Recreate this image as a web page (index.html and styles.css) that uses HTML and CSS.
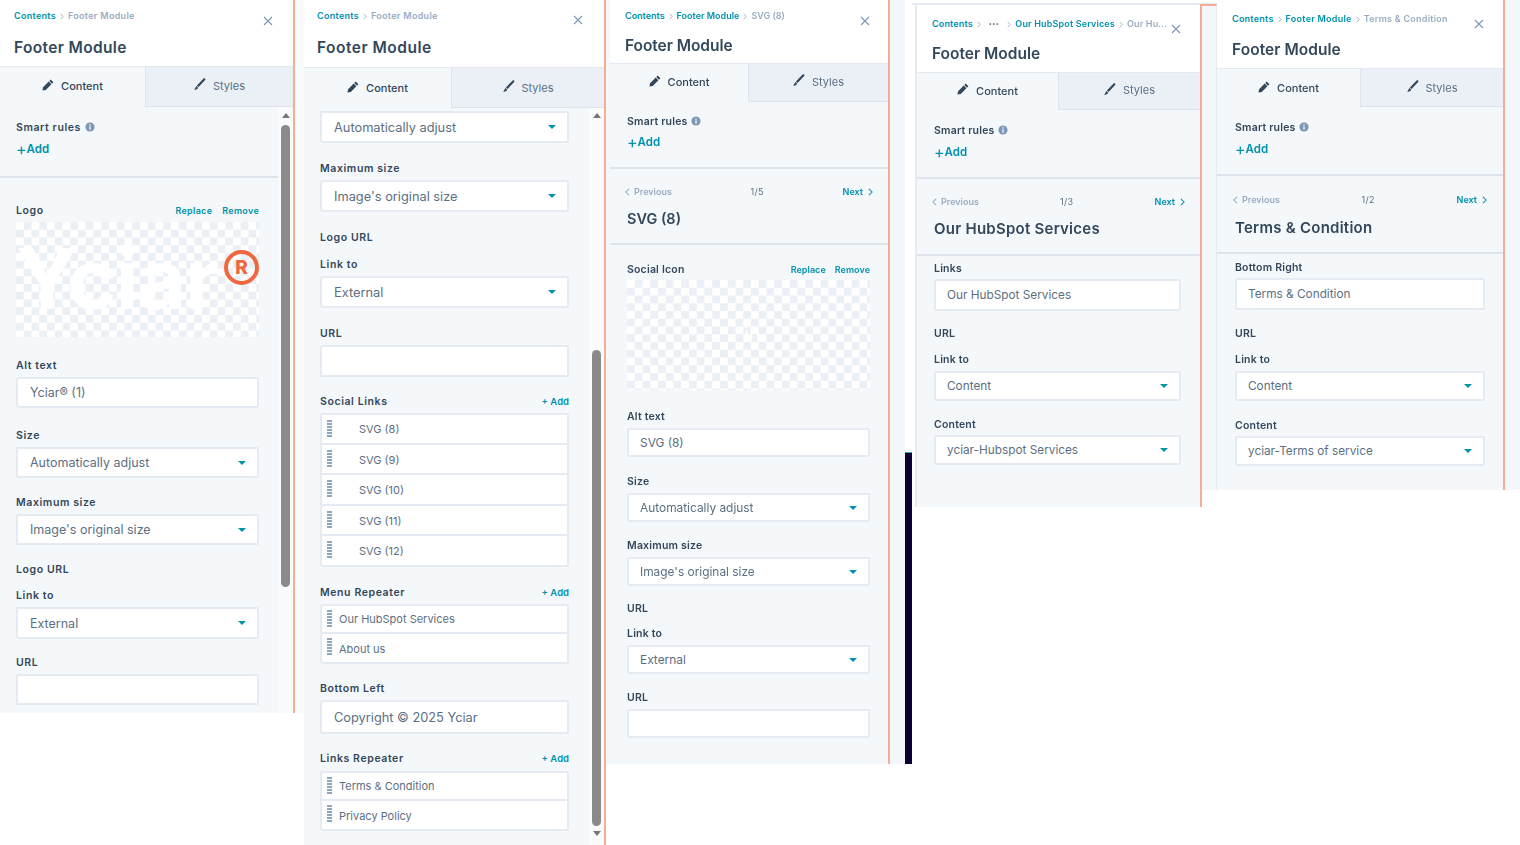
FILE: index.html
```html
<!DOCTYPE html>
<html lang="en">
<head>
<meta charset="utf-8">
<title>Footer Module</title>
<link rel="stylesheet" href="styles.css">
</head>
<body>
<svg class="defs" aria-hidden="true">
  <symbol id="pencil" viewBox="0 0 12 12"><path d="M8.7.6 11.400 3.300 10 4.700 7.300 2ZM6.700 2.600 9.400 5.300 3.800 10.900.4 11.600 1.100 8.200Z"/></symbol>
  <symbol id="brush" viewBox="0 0 12 12"><path d="M11 .5c.6.5.6 1 .1 1.500L4.600 9 2.900 7.400 9.600.6c.5-.4 1-.5 1.400-.1ZM2.300 8l2 1.700C3.500 11.300 2 11.700.2 11.700 1.300 10.700 1.500 9.200 2.300 8Z"/></symbol>
  <symbol id="info" viewBox="0 0 12 12"><circle cx="6" cy="6" r="5.500"/><rect x="5.200" y="5.200" width="1.600" height="4" fill="#f5f8fa"/><rect x="5.200" y="2.700" width="1.600" height="1.600" fill="#f5f8fa"/></symbol>
  <symbol id="close" viewBox="0 0 10 10"><path d="M1 1l8 8M9 1 1 9" fill="none" stroke="currentColor" stroke-width="1.100"/></symbol>
  <symbol id="chev-r" viewBox="0 0 6 10"><path d="M1 1l4 4-4 4" fill="none" stroke="currentColor" stroke-width="1.300"/></symbol>
  <symbol id="chev-l" viewBox="0 0 6 10"><path d="M5 1 1 5l4 4" fill="none" stroke="currentColor" stroke-width="1.300"/></symbol>
</svg>

<div class="strip s-a"></div>
<div class="strip s-b"></div>
<div class="strip s-c"></div>
<div class="strip s-d"></div>
<div class="strip s-e"></div>
<div class="strip s-f"></div>
<div class="strip s-g"></div>

<!-- Panel 1 -->
<section class="win w1">
  <header class="hdr">
    <nav class="crumbs"><a>Contents</a><svg class="cv"><use href="#chev-r"/></svg><span>Footer Module</span></nav>
    <h1 class="ttl">Footer Module</h1>
    <svg class="x"><use href="#close"/></svg>
  </header>
  <div class="tabs">
    <div class="tab on"><svg class="ti"><use href="#pencil"/></svg>Content</div>
    <div class="tab"><svg class="ti"><use href="#brush"/></svg>Styles</div>
  </div>
  <div class="body">
    <div class="main">
      <div class="rules">
        <div class="lbl">Smart rules <svg class="inf"><use href="#info"/></svg></div>
        <a class="add"><span class="pl">+</span>Add</a>
      </div>
      <div class="fields">
        <div class="head mt-25"><span class="lbl">Logo</span><span class="acts"><a>Replace</a><a>Remove</a></span></div>
        <div class="chk mt-5 h-115"><span class="brand">Yciar</span><span class="reg">R</span></div>
        <div class="lbl mt-21">Alt text</div>
        <div class="ctl mt-5 h-31">Yciar® (1)</div>
        <div class="lbl mt-20">Size</div>
        <div class="ctl sel mt-5 h-31">Automatically adjust</div>
        <div class="lbl mt-17">Maximum size</div>
        <div class="ctl sel mt-5 h-31">Image's original size</div>
        <div class="lbl mt-17">Logo URL</div>
        <div class="lbl mt-12">Link to</div>
        <div class="ctl sel mt-5 h-32">External</div>
        <div class="lbl mt-16">URL</div>
        <div class="ctl mt-5 h-31"></div>
      </div>
    </div>
    <div class="sb"><i class="up"></i><b class="thumb"></b></div>
  </div>
</section>

<!-- Panel 2 -->
<section class="win w2">
  <header class="hdr">
    <nav class="crumbs"><a>Contents</a><svg class="cv"><use href="#chev-r"/></svg><span>Footer Module</span></nav>
    <h1 class="ttl">Footer Module</h1>
    <svg class="x"><use href="#close"/></svg>
  </header>
  <div class="tabs">
    <div class="tab on"><svg class="ti"><use href="#pencil"/></svg>Content</div>
    <div class="tab"><svg class="ti"><use href="#brush"/></svg>Styles</div>
  </div>
  <div class="body">
    <div class="main">
      <div class="fields">
        <div class="ctl sel mt-3 h-32">Automatically adjust</div>
        <div class="lbl mt-18">Maximum size</div>
        <div class="ctl sel mt-5 h-32">Image's original size</div>
        <div class="lbl mt-18">Logo URL</div>
        <div class="lbl mt-13">Link to</div>
        <div class="ctl sel mt-5 h-32">External</div>
        <div class="lbl mt-18">URL</div>
        <div class="ctl mt-5 h-32"></div>
        <div class="head mt-17"><span class="lbl">Social Links</span><a class="plus">+ Add</a></div>
        <ul class="list mt-5">
          <li class="row deep">SVG (8)</li>
          <li class="row deep">SVG (9)</li>
          <li class="row deep">SVG (10)</li>
          <li class="row deep">SVG (11)</li>
          <li class="row deep">SVG (12)</li>
        </ul>
        <div class="head mt-18"><span class="lbl">Menu Repeater</span><a class="plus">+ Add</a></div>
        <ul class="list mt-5">
          <li class="row">Our HubSpot Services</li>
          <li class="row">About us</li>
        </ul>
        <div class="lbl mt-17">Bottom Left</div>
        <div class="ctl mt-5 h-34">Copyright © 2025 Yciar</div>
        <div class="head mt-17"><span class="lbl">Links Repeater</span><a class="plus">+ Add</a></div>
        <ul class="list mt-6">
          <li class="row">Terms &amp; Condition</li>
          <li class="row">Privacy Policy</li>
        </ul>
      </div>
    </div>
    <div class="sb"><i class="up"></i><b class="thumb"></b><i class="down"></i></div>
  </div>
</section>

<!-- Panel 3 -->
<section class="win w3">
  <header class="hdr">
    <nav class="crumbs"><a>Contents</a><svg class="cv"><use href="#chev-r"/></svg><a>Footer Module</a><svg class="cv"><use href="#chev-r"/></svg><span>SVG (8)</span></nav>
    <h1 class="ttl">Footer Module</h1>
    <svg class="x"><use href="#close"/></svg>
  </header>
  <div class="tabs">
    <div class="tab on"><svg class="ti"><use href="#pencil"/></svg>Content</div>
    <div class="tab"><svg class="ti"><use href="#brush"/></svg>Styles</div>
  </div>
  <div class="body">
    <div class="main">
      <div class="rules">
        <div class="lbl">Smart rules <svg class="inf"><use href="#info"/></svg></div>
        <a class="add"><span class="pl">+</span>Add</a>
      </div>
      <div class="pager">
        <div class="pg"><span class="prev"><svg class="cl"><use href="#chev-l"/></svg>Previous</span><span class="cnt">1/5</span><a class="next">Next<svg class="cl"><use href="#chev-r"/></svg></a></div>
        <h2 class="sub">SVG (8)</h2>
      </div>
      <div class="fields">
        <div class="head mt-17"><span class="lbl">Social Icon</span><span class="acts"><a>Replace</a><a>Remove</a></span></div>
        <div class="chk mt-4 h-110"><span class="glyph">in</span></div>
        <div class="lbl mt-19">Alt text</div>
        <div class="ctl mt-5 h-29">SVG (8)</div>
        <div class="lbl mt-17">Size</div>
        <div class="ctl sel mt-5 h-29">Automatically adjust</div>
        <div class="lbl mt-16">Maximum size</div>
        <div class="ctl sel mt-5 h-29">Image's original size</div>
        <div class="lbl mt-15">URL</div>
        <div class="lbl mt-11">Link to</div>
        <div class="ctl sel mt-5 h-29">External</div>
        <div class="lbl mt-16">URL</div>
        <div class="ctl mt-5 h-29"></div>
      </div>
    </div>
  </div>
</section>

<!-- Panel 4 -->
<section class="win w4">
  <header class="hdr">
    <nav class="crumbs"><a>Contents</a><svg class="cv"><use href="#chev-r"/></svg><span class="dots">•••</span><svg class="cv"><use href="#chev-r"/></svg><a>Our HubSpot Services</a><svg class="cv"><use href="#chev-r"/></svg><span>Our Hu...</span></nav>
    <h1 class="ttl">Footer Module</h1>
    <svg class="x"><use href="#close"/></svg>
  </header>
  <div class="tabs">
    <div class="tab on"><svg class="ti"><use href="#pencil"/></svg>Content</div>
    <div class="tab"><svg class="ti"><use href="#brush"/></svg>Styles</div>
  </div>
  <div class="body">
    <div class="main">
      <div class="rules">
        <div class="lbl">Smart rules <svg class="inf"><use href="#info"/></svg></div>
        <a class="add"><span class="pl">+</span>Add</a>
      </div>
      <div class="pager">
        <div class="pg"><span class="prev"><svg class="cl"><use href="#chev-l"/></svg>Previous</span><span class="cnt">1/3</span><a class="next">Next<svg class="cl"><use href="#chev-r"/></svg></a></div>
        <h2 class="sub">Our HubSpot Services</h2>
      </div>
      <div class="fields">
        <div class="lbl mt-5">Links</div>
        <div class="ctl mt-4 h-32">Our HubSpot Services</div>
        <div class="lbl mt-15">URL</div>
        <div class="lbl mt-12">Link to</div>
        <div class="ctl sel mt-5 h-30">Content</div>
        <div class="lbl mt-16">Content</div>
        <div class="ctl sel mt-4 h-30">yciar-Hubspot Services</div>
      </div>
    </div>
  </div>
</section>

<!-- Panel 5 -->
<section class="win w5">
  <header class="hdr">
    <nav class="crumbs"><a>Contents</a><svg class="cv"><use href="#chev-r"/></svg><a>Footer Module</a><svg class="cv"><use href="#chev-r"/></svg><span>Terms &amp; Condition</span></nav>
    <h1 class="ttl">Footer Module</h1>
    <svg class="x"><use href="#close"/></svg>
  </header>
  <div class="tabs">
    <div class="tab on"><svg class="ti"><use href="#pencil"/></svg>Content</div>
    <div class="tab"><svg class="ti"><use href="#brush"/></svg>Styles</div>
  </div>
  <div class="body">
    <div class="main">
      <div class="rules">
        <div class="lbl">Smart rules <svg class="inf"><use href="#info"/></svg></div>
        <a class="add"><span class="pl">+</span>Add</a>
      </div>
      <div class="pager">
        <div class="pg"><span class="prev"><svg class="cl"><use href="#chev-l"/></svg>Previous</span><span class="cnt">1/2</span><a class="next">Next<svg class="cl"><use href="#chev-r"/></svg></a></div>
        <h2 class="sub">Terms &amp; Condition</h2>
      </div>
      <div class="fields">
        <div class="lbl mt-6">Bottom Right</div>
        <div class="ctl mt-4 h-32">Terms &amp; Condition</div>
        <div class="lbl mt-16">URL</div>
        <div class="lbl mt-12">Link to</div>
        <div class="ctl sel mt-5 h-30">Content</div>
        <div class="lbl mt-17">Content</div>
        <div class="ctl sel mt-4 h-30">yciar-Terms of service</div>
      </div>
    </div>
  </div>
</section>
</body>
</html>
```

FILE: styles.css
```css
* { box-sizing: border-box; }
html, body { margin: 0; padding: 0; }
body {
  position: relative;
  width: 1520px;
  height: 845px;
  overflow: hidden;
  background: #fff;
  color: #33475b;
  font-family: Inter, "Noto Sans", sans-serif;
  filter: blur(0.3px);
}
.defs { position: absolute; width: 0; height: 0; }
a { color: #0091ae; }

/* free-canvas pieces of the collage */
.strip { position: absolute; }
.s-a { left: 295px; top: 0; width: 9px; height: 713px; background: #fafbfc; }
.s-b { left: 606px; top: 0; width: 4px; height: 764px; background: #f5f8fa; }
.s-c { left: 890px; top: 0; width: 15px; height: 764px; background: #f5f8fa; }
.s-d { left: 905px; top: 452px; width: 7px; height: 312px; background: #0a0033; border-top: 1px solid #2aa5bd; }
.s-e { left: 912px; top: 3px; width: 305px; height: 2px; background: #e6ebf2; }
.s-f { left: 1200px; top: 4px; width: 17px; height: 486px; background: #f5f8fa; border-top: 2px solid #f6ad95; border-right: 1px solid #e6ebf2; }
.s-g { left: 1505px; top: 0; width: 15px; height: 490px; background: #f5f8fa; }

.win {
  position: absolute;
  display: flex;
  flex-direction: column;
  background: #f5f8fa;
  border-right: 2px solid #f6ad95;
}
.w1 { left: 0; top: 0; width: 295px; height: 713px; --inset: 16px; --fw: 243px; --hh: 67px; --tabh: 40px; --on: 145px; --tx: 14px; --ct: 10px; --tt: 15px; --fs: 12.500px; --ip: 12px; --ls: 0.600px; --cs: 0.300px; --ts: 0.350px; --tp: 2px; }
.w2 { left: 304px; top: 0; width: 302px; height: 845px; --inset: 16px; --fw: 249px; --hh: 68px; --tabh: 40px; --on: 147px; --tx: 13px; --ct: 10px; --tt: 15px; --fs: 12.800px; --ip: 12px; --ls: 0.600px; --cs: 0.300px; --ts: 0.500px; --tp: 0px; }
.w3 { left: 610px; top: 0; width: 280px; height: 764px; --inset: 17px; --fw: 243px; --hh: 64px; --tabh: 38px; --on: 138px; --tx: 15px; --ct: 10px; --tt: 13px; --fs: 11.900px; --ip: 11px; --ls: 0.200px; --cs: 0px; --ts: -0.050px; --tp: 2px; }
.w4 { left: 917px; top: 5px; width: 285px; height: 502px; --inset: 17px; --fw: 247px; --hh: 68px; --tabh: 37px; --on: 141px; --tx: 15px; --ct: 13px; --tt: 13px; --fs: 11.800px; --ip: 11px; --ls: 0.200px; --cs: 0.150px; --ts: 0px; --tp: 2px; box-shadow: -2px 0 0 #e6ebf2; }
.w5 { left: 1217px; top: 0; width: 288px; height: 490px; --inset: 18px; --fw: 250px; --hh: 69px; --tabh: 38px; --on: 143px; --tx: 15px; --ct: 13px; --tt: 14px; --fs: 11.800px; --ip: 11px; --ls: 0.200px; --cs: 0.250px; --ts: 0.050px; --tp: 0px; }

/* header */
.hdr {
  position: relative;
  flex: none;
  height: var(--hh);
  padding: var(--ct) 0 0 var(--tx);
  background: #fff;
  border-bottom: 1px solid #e3e9f0;
}
.crumbs {
  display: flex;
  align-items: center;
  gap: 4px;
  height: 12px;
  font-size: 9px;
  font-weight: 600;
  line-height: 12px;
  letter-spacing: var(--cs);
  white-space: nowrap;
}
.crumbs span { color: #99acc2; }
.cv { width: 4px; height: 7px; color: #99acc2; }
.dots { font-size: 6px; letter-spacing: 0.5px; margin: 0 4px; color: #516f90 !important; }
.ttl {
  margin: var(--tt) 0 0;
  font-size: 15.500px;
  font-weight: 600;
  line-height: 22px;
  letter-spacing: var(--ts);
  color: #33475b;
}
.x { position: absolute; width: 10px; height: 10px; color: #7c98b6; }
.w1 .x { left: 263px; top: 16px; }
.w2 .x { left: 269px; top: 15px; }
.w3 .x { left: 250px; top: 16px; }
.w4 .x { left: 254px; top: 19px; }
.w5 .x { left: 257px; top: 19px; }

/* tabs */
.tabs { display: flex; flex: none; height: var(--tabh); }
.tab {
  flex: 1;
  display: flex;
  align-items: center;
  justify-content: center;
  gap: 7px;
  padding-bottom: var(--tp);
  font-size: 11px;
  background: #eaf0f6;
  color: #5a6f85;
  border-left: 1px solid #dfe3eb;
  border-bottom: 1px solid #dfe3eb;
}
.tab.on {
  flex: none;
  width: var(--on);
  background: #f5f8fa;
  color: #33475b;
  font-weight: 500;
  border: 0;
}
.ti { width: 12px; height: 12px; fill: #33475b; margin-top: -3px; }

/* body */
.body { flex: 1; display: flex; min-height: 0; }
.main { flex: 1; min-width: 0; overflow: hidden; }
.fields { width: calc(var(--fw) + var(--inset)); padding-left: var(--inset); }

.rules { padding: 13px 0 0 var(--inset); border-bottom: 2px solid #dfe3eb; }
.w1 .rules { height: 71px; }
.w3 .rules { height: 67px; padding-top: 12px; }
.w4 .rules { height: 69px; }
.w5 .rules { height: 69px; }
.rules .add { display: flex; align-items: center; height: 14px; margin-top: 8px; }
.w3 .rules .add { margin-top: 7px; }

.lbl {
  display: block;
  height: 14px;
  padding-top: 1px;
  font-size: 10.500px;
  font-weight: 600;
  line-height: 14px;
  letter-spacing: var(--ls);
  color: #33475b;
  white-space: nowrap;
}
.inf { width: 10px; height: 10px; fill: #7c98b6; vertical-align: -1px; margin-left: 1px; }
.add { font-size: 11.500px; font-weight: 600; line-height: 14px; }
.pl { font-size: 16px; font-weight: 400; line-height: 14px; }
.head { display: flex; justify-content: space-between; align-items: center; height: 14px; }
.acts { display: flex; gap: 10px; font-size: 9px; font-weight: 600; letter-spacing: 0.300px; }
.w3 .acts { gap: 9px; letter-spacing: 0.050px; }
.plus { font-size: 9.500px; font-weight: 600; }

.ctl {
  position: relative;
  display: flex;
  align-items: center;
  padding-left: var(--ip);
  background: #fff;
  border: 2px solid #e6ebf3;
  border-radius: 2px;
  font-size: var(--fs);
  color: #5c6f82;
  white-space: nowrap;
}
.sel::after {
  content: "";
  position: absolute;
  right: 11px;
  top: 50%;
  margin-top: -2px;
  border: 4px solid transparent;
  border-top-color: #0091ae;
  border-bottom: 0;
}

/* checkerboard previews */
.chk {
  position: relative;
  overflow: hidden;
  background: conic-gradient(#eaf0f6 25%, #fff 0 50%, #eaf0f6 0 75%, #fff 0) 0 0 / 15.500px 15.500px;
}
.brand {
  position: absolute;
  left: 0;
  top: 12px;
  font-size: 84px;
  font-weight: 700;
  line-height: 90px;
  letter-spacing: -1px;
  color: #fff;
}
.reg {
  position: absolute;
  left: 208px;
  top: 28px;
  width: 35px;
  height: 35px;
  display: flex;
  align-items: center;
  justify-content: center;
  border: 4px solid #f0683f;
  border-radius: 50%;
  font-size: 19px;
  font-weight: 800;
  color: #f0683f;
}
.glyph {
  position: absolute;
  left: 117px;
  top: 42px;
  font-size: 20px;
  line-height: 24px;
  color: #fff;
}

/* repeater lists */
.list {
  margin-bottom: 0;
  padding: 0;
  list-style: none;
  background: #fff;
  border: 2px solid #e6ebf3;
  border-radius: 2px;
}
.row {
  position: relative;
  display: flex;
  align-items: center;
  height: 28px;
  padding-left: 17px;
  font-size: 11px;
  color: #5c6f82;
  border-bottom: 2px solid #e6ebf3;
}
.row:last-child { border-bottom: 0; padding-top: 2px; }
.row.deep { padding-left: 37px; height: 30px; }
.row.deep:nth-child(even) { padding-top: 2px; }
.row.deep:nth-child(3) { height: 31px; }
.row.deep:last-child { height: 29px; padding-top: 0; }
.row::before {
  content: "";
  position: absolute;
  left: 5px;
  top: 4px;
  width: 5px;
  height: 18px;
  background: repeating-linear-gradient(#8fa6c0 0 2px, transparent 2px 3px);
}
.row.deep::before { top: 5px; }

/* pager */
.pager { padding: 15px var(--inset) 14px; border-bottom: 2px solid #dfe3eb; }
.w5 .pager { padding-top: 16px; }
.w4 .pager { padding-bottom: 15px; }
.pg {
  display: flex;
  justify-content: space-between;
  align-items: center;
  height: 14px;
  margin: 0 -2px;
  padding-top: 1px;
  font-size: 9px;
  font-weight: 600;
}
.prev { display: flex; align-items: center; gap: 4px; color: #99acc2; }
.cnt { font-weight: 400; color: #5c6f82; letter-spacing: 0.300px; }
.next { display: flex; align-items: center; gap: 5px; }
.cl { width: 5px; height: 8px; }
.sub {
  margin: 11px 0 0;
  font-size: 14.500px;
  font-weight: 600;
  line-height: 20px;
  color: #33475b;
}
.w4 .sub, .w5 .sub { font-size: 15px; letter-spacing: 0.250px; }
.w5 .sub { margin-top: 12px; }

/* scrollbar */
.sb {
  flex: none;
  width: 15px;
  display: flex;
  flex-direction: column;
  align-items: center;
  background: #fafbfc;
}
.up, .down { display: block; border: 4px solid transparent; }
.up { border-top: 0; border-bottom: 5px solid #777; margin-top: 6px; }
.down { border-bottom: 0; border-top: 5px solid #777; margin-top: 5px; }
.thumb { display: block; width: 9px; background: #8a8a8a; border-radius: 5px; }
.w1 .thumb { height: 462px; margin-top: 7px; }
.w2 .up { margin-top: 5px; }
.w2 .thumb { height: 476px; margin-top: 232px; }

/* spacing and height steps */
.mt-3 { margin-top: 3px; }
.mt-4 { margin-top: 4px; }
.mt-5 { margin-top: 5px; }
.mt-6 { margin-top: 6px; }
.mt-11 { margin-top: 11px; }
.mt-12 { margin-top: 12px; }
.mt-13 { margin-top: 13px; }
.mt-15 { margin-top: 15px; }
.mt-16 { margin-top: 16px; }
.mt-17 { margin-top: 17px; }
.mt-18 { margin-top: 18px; }
.mt-19 { margin-top: 19px; }
.mt-20 { margin-top: 20px; }
.mt-21 { margin-top: 21px; }
.mt-25 { margin-top: 25px; }
.h-29 { height: 29px; }
.h-30 { height: 30px; }
.h-31 { height: 31px; }
.h-32 { height: 32px; }
.h-34 { height: 34px; }
.h-110 { height: 110px; }
.h-115 { height: 115px; }
```
